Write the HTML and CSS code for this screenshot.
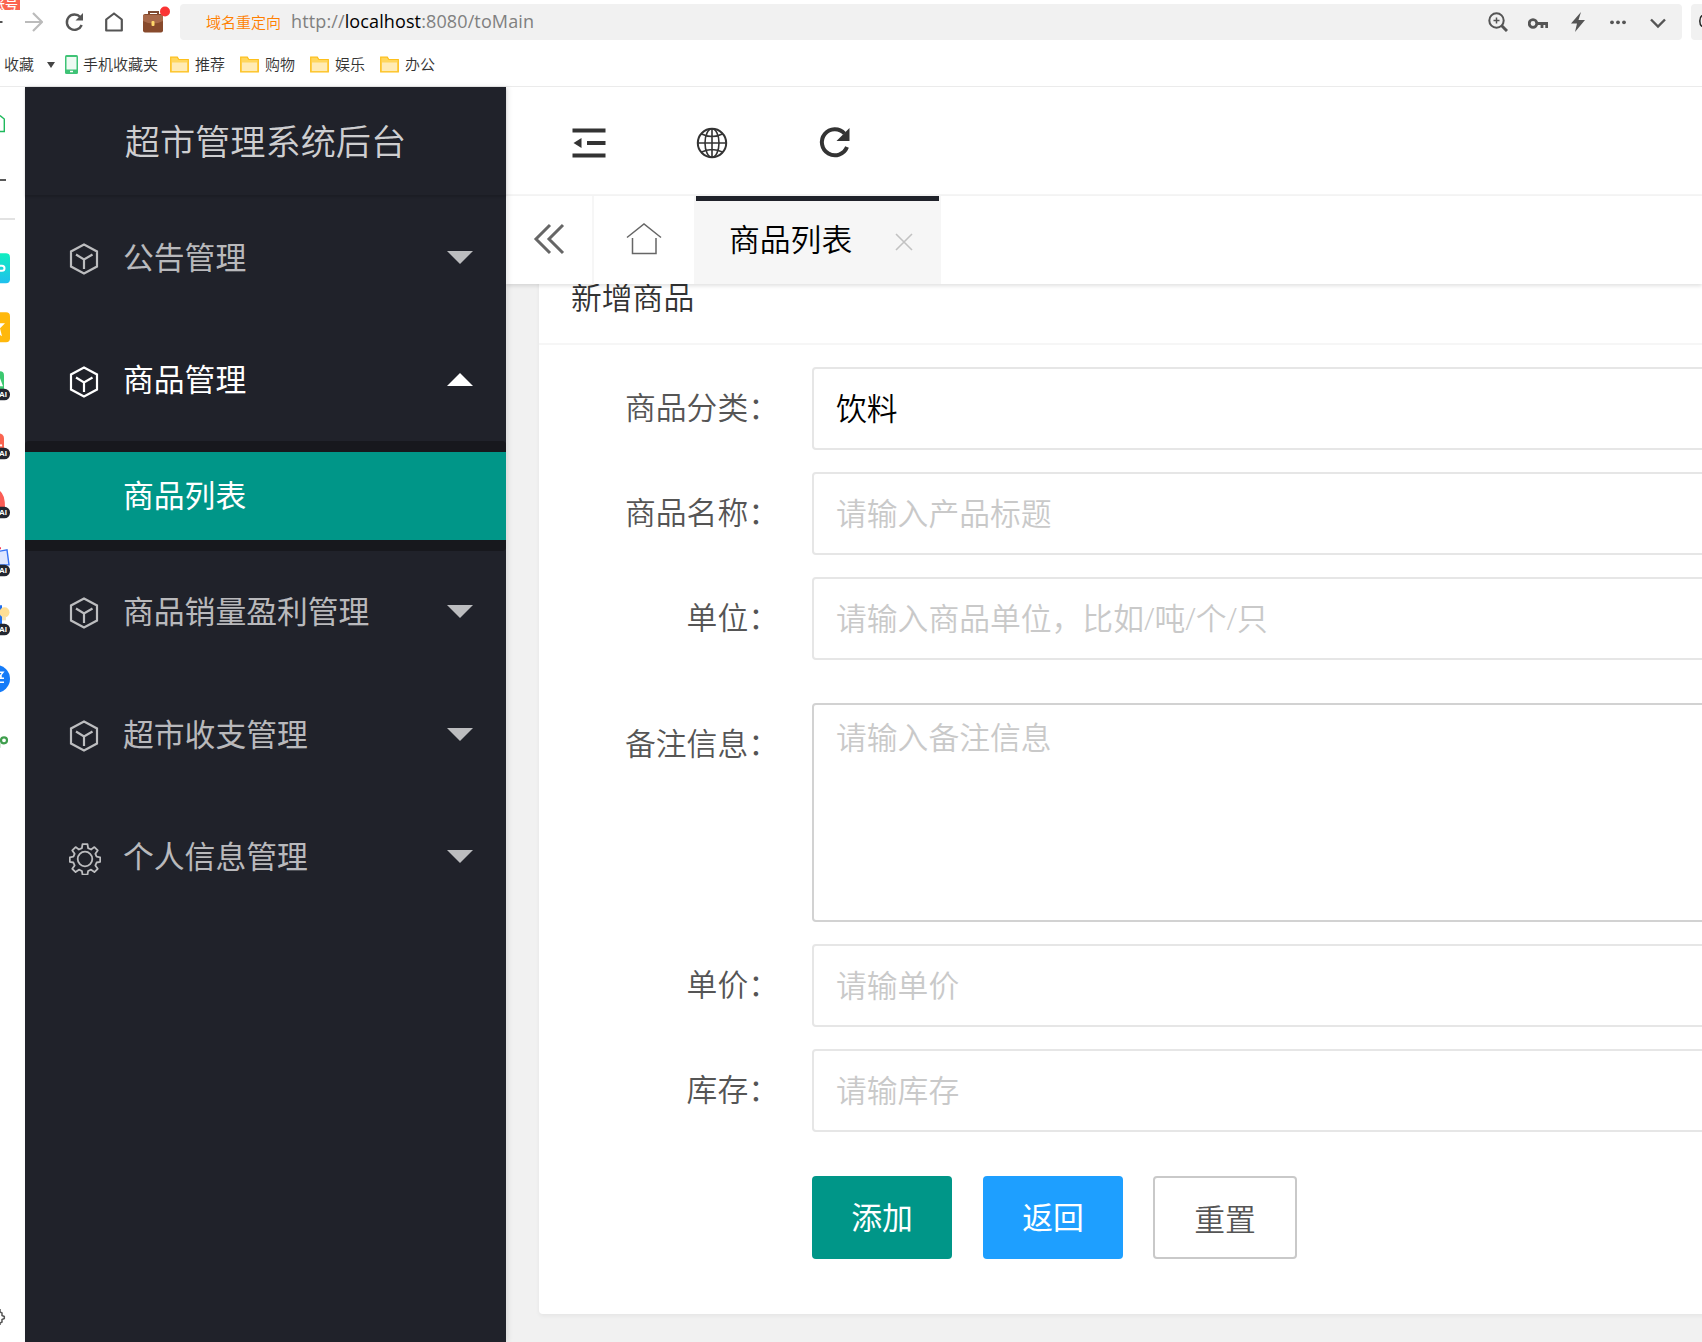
FILE: index.html
```html
<!DOCTYPE html>
<html lang="zh-CN">
<head>
  <meta charset="UTF-8">
  <title>超市管理系统后台</title>
  <link rel="stylesheet" href="styles.css">
</head>
<body>
  <!-- 图标 -->
  <svg class="defs" width="0" height="0">
    <symbol id="i-cube" viewBox="0 0 30 32">
      <path d="M15 1.500 28 8.500V23.500L15 30.500 2 23.500V8.500Z M7 11.500 15 16.500 23.500 11.500 M15 16.500V26" fill="none" stroke="currentColor" stroke-width="2.200"/>
    </symbol>
    <symbol id="i-folder" viewBox="0 0 19 17">
      <path d="M.7 15.500V1.200h6.600l1.500 2.300h9.500v12.300H.7Z" fill="#ffd65c" stroke="#fdbf1b" stroke-width="1.200"/>
      <path d="M2 6.500h15v8.500H2Z" fill="#ffebb5"/>
    </symbol>
  </svg>

  <div class="browser">
    <div class="nav">
      <div class="badge">账号</div>
      <svg class="back" width="3" height="20"><path d="M0 10h2.500" stroke="#555" stroke-width="2"/></svg>
      <svg class="forward" width="18" height="20" viewBox="0 0 18 20"><path d="M0 10h16.500M8 1l9 9-9 9" fill="none" stroke="#bbb" stroke-width="2.200"/></svg>
      <svg class="reload" width="19" height="20" viewBox="0 0 19 20"><path d="M15.300 5A7.700 7.700 0 1 0 16.700 13" fill="none" stroke="#555" stroke-width="2.400"/><path d="M18 1v7.500h-7.500Z" fill="#555"/></svg>
      <svg class="home" width="18" height="20" viewBox="0 0 18 20"><path d="M1.200 7.500 9 1.500l7.800 6v11H1.200Z" fill="none" stroke="#555" stroke-width="2.200" stroke-linejoin="round"/></svg>
      <svg class="case" width="30" height="28" viewBox="0 0 30 28">
        <path d="M7 10V7h9v3" fill="none" stroke="#7d4a33" stroke-width="2"/>
        <rect x="1" y="9" width="20" height="18.500" rx="2" fill="#884a2c"/>
        <path d="M1 10h20v6q-10 5-20 0Z" fill="#a8694a"/>
        <rect x="9.500" y="16" width="3" height="5" rx="1" fill="#ffd76a"/>
        <circle cx="23" cy="6.500" r="5" fill="#fa3434"/>
      </svg>
      <div class="address">
        <span class="redirect">域名重定向</span>
        <span class="url">http://<b>localhost</b>:8080/toMain</span>
        <div class="tools">
          <svg width="20" height="20" viewBox="0 0 20 20"><circle cx="8.500" cy="8.500" r="7.200" fill="none" stroke="#555" stroke-width="2"/><path d="M5.500 8.500h6M8.500 5.500v6" stroke="#555" stroke-width="1.500"/><path d="m13.500 13.500 5.500 5.500" stroke="#555" stroke-width="3"/></svg>
          <svg width="20" height="20" viewBox="0 0 20 20"><circle cx="5" cy="11.500" r="3.800" fill="none" stroke="#555" stroke-width="2.800"/><path d="M8 11.500h12M14 11.500v4.500M18.700 11.500v4.500" fill="none" stroke="#555" stroke-width="2.800"/></svg>
          <svg width="20" height="20" viewBox="0 0 20 20"><path d="M13 0 3 11.500h6L7 20 17 8h-6.500Z" fill="#555"/></svg>
          <svg width="20" height="20" viewBox="0 0 20 20"><g fill="#555"><circle cx="4" cy="10.300" r="1.900"/><circle cx="10" cy="10.300" r="1.900"/><circle cx="16" cy="10.300" r="1.900"/></g></svg>
          <svg width="20" height="20" viewBox="0 0 20 20"><path d="m3 7.500 7 7 7-7" fill="none" stroke="#555" stroke-width="2.400"/></svg>
        </div>
      </div>
      <div class="search"><svg width="3" height="12" viewBox="0 0 3 12"><path d="M3 .5Q.8 2 .8 6T3 11.500" fill="none" stroke="#222" stroke-width="1.500"/></svg></div>
    </div>
    <div class="bookmarks">
      <span class="fav">收藏</span>
      <i class="caret"></i>
      <svg class="phone" width="13" height="19" viewBox="0 0 13 19"><rect width="13" height="19" rx="1.500" fill="#3fc376"/><path d="M1.500 2h10v12.500h-10Z" fill="#effaf3"/><path d="M5 16.500h3" stroke="#fff" stroke-width="1.500"/></svg>
      <span class="phone-label">手机收藏夹</span>
      <div class="folder"><svg width="19" height="17"><use href="#i-folder"/></svg><span>推荐</span></div>
      <div class="folder"><svg width="19" height="17"><use href="#i-folder"/></svg><span>购物</span></div>
      <div class="folder"><svg width="19" height="17"><use href="#i-folder"/></svg><span>娱乐</span></div>
      <div class="folder"><svg width="19" height="17"><use href="#i-folder"/></svg><span>办公</span></div>
    </div>
  </div>

  <div class="main">
    <!-- 浏览器侧栏 -->
    <div class="rail">
      <svg class="rail-top" width="25" height="152" viewBox="0 0 25 152">
        <path d="M0 28.500 4.300 32v12.500H0" fill="none" stroke="#1fb95c" stroke-width="1.400"/>
        <path d="M0 93h6" stroke="#222" stroke-width="1.500"/>
        <path d="M0 132h15" stroke="#e2e2e2" stroke-width="2"/>
      </svg>
      <svg viewBox="0 0 25 58">
        <defs><linearGradient id="g" x2="0" y2="1"><stop stop-color="#10eec0"/><stop offset="1" stop-color="#20bfee"/></linearGradient></defs>
        <rect x="-20" y="14" width="30" height="30" rx="4" fill="url(#g)"/>
        <path d="M-1 26.500h3a2.500 2.500 0 0 1 0 5h-3" fill="none" stroke="#fff" stroke-width="2"/>
      </svg>
      <svg viewBox="0 0 25 58"><rect x="-20" y="14" width="30" height="30" rx="4" fill="#ffb80c"/><path d="M-4 25h9L0 30l2 8-6-4Z" fill="#fff"/></svg>
      <svg viewBox="0 0 25 58">
        <rect x="-20" y="15" width="24" height="24" rx="4" fill="#3cc870"/><path d="M-3 30 0 22l3 8Z" fill="#fff"/>
        <rect x="-8" y="32.500" width="18" height="11.500" rx="5.500" fill="#222630"/><text x="-1" y="41">AI</text>
      </svg>
      <svg viewBox="0 0 25 58">
        <rect x="-20" y="18" width="24" height="20" rx="5" fill="#fa6450"/><circle cx="1" cy="30" r="1.200" fill="#fff"/>
        <rect x="-8" y="32.500" width="18" height="11.500" rx="5.500" fill="#222630"/><text x="-1" y="41">AI</text>
      </svg>
      <svg viewBox="0 0 25 58">
        <path d="M-1 16q6 3 6 17h-6Z" fill="#fb5d56"/>
        <rect x="-8" y="32.500" width="18" height="11.500" rx="5.500" fill="#222630"/><text x="-1" y="41">AI</text>
      </svg>
      <svg viewBox="0 0 25 58">
        <path d="m-1 19 8-1.500 2 15h-10Z" fill="#dfe6ff" stroke="#3672f5" stroke-width="1.400"/><path d="M0 15v2" stroke="#f43f5e" stroke-width="2"/>
        <rect x="-8" y="32.500" width="18" height="11.500" rx="5.500" fill="#222630"/><text x="-1" y="41">AI</text>
      </svg>
      <svg viewBox="0 0 25 58">
        <path d="M-1 14h3v20h-3Z" fill="#1f6ff0"/><circle cx="4.500" cy="21" r="5" fill="#ffdf94"/><path d="M2 25h4v4H2Z" fill="#f4e3b6"/>
        <rect x="-8" y="32.500" width="18" height="11.500" rx="5.500" fill="#222630"/><text x="-1" y="41">AI</text>
      </svg>
      <svg viewBox="0 0 25 58"><circle cx="-4" cy="28.500" r="14" fill="#157bf8"/><path d="M-1 22h4l-4 5M-1 28h5M-1 32h5M1 25v3" fill="none" stroke="#fff" stroke-width="1.500"/></svg>
      <svg viewBox="0 0 25 58"><circle cx="4" cy="31" r="3" fill="none" stroke="#3f9e4d" stroke-width="2.200"/><path d="M0 33.500v5" stroke="#a6d8ad" stroke-width="1"/></svg>
      <svg class="rail-gear" width="10" height="20" viewBox="0 0 10 20"><path d="M0 2v3l2 1v2.500l2.300 1v2L2 12.500V15l-2 1v2" fill="none" stroke="#555" stroke-width="1.500"/></svg>
    </div>

    <div class="side">
      <div class="logo">超市管理系统后台</div>
      <ul class="menu">
        <li class="item"><svg class="ico"><use href="#i-cube"/></svg><span>公告管理</span><i class="more"></i></li>
        <li class="item open"><svg class="ico"><use href="#i-cube"/></svg><span>商品管理</span><i class="more"></i></li>
        <li class="child"><a class="this">商品列表</a></li>
        <li class="item"><svg class="ico"><use href="#i-cube"/></svg><span>商品销量盈利管理</span><i class="more"></i></li>
        <li class="item"><svg class="ico"><use href="#i-cube"/></svg><span>超市收支管理</span><i class="more"></i></li>
        <li class="item">
          <svg class="ico gear" viewBox="0 0 32 32"><g fill="none" stroke="currentColor" stroke-width="1.800" stroke-linejoin="round"><circle cx="16" cy="16" r="7.300"/><path d="M13.500 1.200h5l.6 4 3 1.300 3.300-2.400 3.300 3.300-2.300 3.400 1.200 2.900 3.600.6v4.600l-3.600.6-1.200 2.900 2.300 3.400-3.300 3.300-3.300-2.400-3 1.300-.6 3.600h-5l-.6-3.600-3-1.300-3.300 2.400-3.300-3.300 2.300-3.400-1.200-2.900-3.600-.6v-4.600l3.600-.6 1.200-2.900-2.300-3.400 3.300-3.300 3.300 2.400 3-1.300Z"/></g></svg>
          <span>个人信息管理</span><i class="more"></i>
        </li>
      </ul>
    </div>

    <div class="content">
      <div class="header">
        <svg width="34" height="34" viewBox="0 0 34 34"><path d="M.5 4.500h33M15 17h18.500M.5 29.500h33" stroke="#333" stroke-width="4"/><path d="M1.500 17 9.500 12v10Z" fill="#333"/></svg>
        <svg width="34" height="34" viewBox="0 0 34 34"><g fill="none" stroke="#333" stroke-width="1.600"><circle cx="17" cy="17" r="14.200" stroke-width="2"/><ellipse cx="17" cy="17" rx="7" ry="14.200"/><path d="M17 3v28M3 17h28M6 7.800q11 5.500 22 0M6 26.200q11-5.500 22 0"/></g></svg>
        <svg width="34" height="34" viewBox="0 0 34 34"><path d="M26.500 7.500A13 13 0 1 0 29 21" fill="none" stroke="#333" stroke-width="4"/><path d="M31.500 2v13h-13Z" fill="#333"/></svg>
      </div>
      <div class="tabs">
        <div class="tab prev"><svg width="32" height="32" viewBox="0 0 32 32"><path d="M17 2 3 16l14 14M30 2 16 16l14 14" fill="none" stroke="#666" stroke-width="3"/></svg></div>
        <div class="tab index"><svg width="36" height="34" viewBox="0 0 36 34"><path d="M1 15.500 18 2l17 13.500M6.500 16v15.500h23.500V16" fill="none" stroke="#666" stroke-width="1.500"/></svg></div>
        <div class="tab active"><span>商品列表</span><svg width="18" height="18" viewBox="0 0 18 18"><path d="m1 1 16 16M17 1 1 17" stroke="#c2c2c2" stroke-width="1.600"/></svg></div>
      </div>
      <div class="page">
        <div class="card">
          <div class="card-header">新增商品</div>
          <form class="form">
            <div class="row"><label>商品分类：</label><input class="input" type="text" value="饮料"></div>
            <div class="row"><label>商品名称：</label><input class="input" type="text" placeholder="请输入产品标题"></div>
            <div class="row"><label>单位：</label><input class="input" type="text" placeholder="请输入商品单位，比如/吨/个/只"></div>
            <div class="row remark"><label>备注信息：</label><textarea class="input" placeholder="请输入备注信息"></textarea></div>
            <div class="row"><label>单价：</label><input class="input" type="text" placeholder="请输单价"></div>
            <div class="row"><label>库存：</label><input class="input" type="text" placeholder="请输库存"></div>
            <div class="buttons">
              <button type="button" class="btn">添加</button>
              <button type="button" class="btn btn-normal">返回</button>
              <button type="reset" class="btn btn-primary">重置</button>
            </div>
          </form>
        </div>
      </div>
    </div>
  </div>
</body>
</html>
```
FILE: styles.css
```css
* {
  box-sizing: border-box;
}
html, body {
  margin: 0;
  padding: 0;
  width: 1702px;
  height: 1342px;
  overflow: hidden;
}
body {
  font-family: "Noto Sans CJK SC", sans-serif;
  font-weight: 350;
  font-size: 30.8px;
  background: #fff;
  display: flex;
  flex-direction: column;
}
svg {
  display: block;
  flex: none;
}
.defs {
  position: absolute;
}

/* 浏览器 */
.browser {
  height: 87px;
  flex: none;
  border-bottom: 1px solid #ebebeb;
  font-size: 15px;
  color: #333;
}
.nav {
  height: 43px;
  display: flex;
  align-items: center;
  position: relative;
}
.badge {
  position: absolute;
  left: 0;
  top: 0;
  width: 20px;
  height: 10px;
  overflow: hidden;
  background: #fb6450;
  color: #fff;
  font-size: 13px;
  font-weight: 500;
  line-height: 8px;
  text-indent: -8px;
  white-space: nowrap;
}
.forward {
  margin-left: 22px;
}
.reload {
  margin-left: 22px;
}
.home {
  margin-left: 21px;
}
.case {
  margin: -6px 0 0 19px;
}
.address {
  width: 1502px;
  height: 36px;
  margin-left: 8px;
  padding: 0 14px 0 26px;
  display: flex;
  align-items: center;
  background: #f1f1f1;
  border-radius: 4px;
  flex: none;
}
.redirect {
  color: #ff7f00;
}
.url {
  margin-left: 10px;
  padding-bottom: 1px;
  font-family: "Open Sans", sans-serif;
  font-weight: 400;
  font-size: 18px;
  letter-spacing: .12px;
  color: #808080;
}
.url b {
  font-weight: 400;
  color: #000;
}
.tools {
  margin-left: auto;
  display: flex;
  gap: 20px;
}
.search {
  width: 11px;
  height: 36px;
  margin-left: 9px;
  padding: 11px 0 0 8px;
  background: #f1f1f1;
  border-radius: 4px 0 0 4px;
}
.bookmarks {
  height: 43px;
  padding-left: 4px;
  display: flex;
  align-items: center;
  white-space: nowrap;
}
.bookmarks span {
  padding-bottom: 2px;
}
.caret {
  border: 4px solid transparent;
  border-top: 6px solid #444;
  border-bottom: 0;
  margin: 0 10px 0 13px;
}
.phone-label {
  margin: 0 12px 0 5px;
}
.folder {
  width: 70px;
  display: flex;
  align-items: center;
  gap: 6px;
}

.main {
  flex: 1;
  min-height: 0;
  display: flex;
}
.rail {
  width: 25px;
  flex: none;
  display: flex;
  flex-direction: column;
}
.rail svg {
  width: 25px;
  height: 58.7px;
}
.rail svg.rail-top {
  height: 152px;
}
.rail svg.rail-gear {
  width: 10px;
  height: 20px;
  margin: auto 0 15px;
}
.rail text {
  font: bold 8px "Liberation Sans", sans-serif;
  fill: #fff;
}

/* 菜单 */
.side {
  width: 481px;
  flex: none;
  background: #20222a;
  color: rgba(255, 255, 255, .7);
  box-shadow: 2px 0 5px rgba(0, 0, 0, .1);
  z-index: 3;
}
.logo {
  height: 108px;
  line-height: 106px;
  text-align: center;
  font-size: 35.2px;
  color: rgba(255, 255, 255, .8);
  box-shadow: 0 2px 2px rgba(0, 0, 0, .15);
}
.menu {
  list-style: none;
  margin: 0;
  padding: 1px 0 0;
}
.item {
  height: 122.6px;
  padding: 0 33px 0 43px;
  display: flex;
  align-items: center;
  font-weight: 400;
}
.item span {
  margin-left: -1px;
  padding-bottom: 4px;
}
.child ~ .item {
  padding-bottom: 2px;
}
.item.open {
  color: #fff;
}
.ico {
  width: 30px;
  height: 32px;
  margin: 4px 25px 0 1px;
}
.ico.gear {
  width: 32px;
  margin-right: 23px;
}
.more {
  margin-left: auto;
  border: 13px solid transparent;
  border-top-color: currentColor;
  border-bottom: 0;
}
.open .more {
  border-top: 0;
  border-bottom: 13px solid #fff;
}
.child {
  padding: 11px 0;
  background: #17181d;
  border-radius: 4px;
}
.this {
  display: block;
  height: 88px;
  line-height: 84px;
  padding-left: 98px;
  background: #009688;
  color: #fff;
  font-weight: 400;
}

/* 内容 */
.content {
  flex: 1;
  min-width: 0;
  display: flex;
  flex-direction: column;
  background: #f1f1f1;
}
.header {
  height: 109px;
  flex: none;
  padding: 4px 0 0 66px;
  display: flex;
  align-items: center;
  gap: 89px;
  background: #fff;
  border-bottom: 2px solid #f6f6f6;
}
.tabs {
  height: 88px;
  flex: none;
  display: flex;
  background: #fff;
  box-shadow: 0 2px 4px rgba(0, 0, 0, .12);
  z-index: 2;
}
.tab {
  display: flex;
  align-items: center;
}
.prev {
  width: 88px;
  padding: 0 0 2px 27px;
  border-right: 2px solid #f6f6f6;
}
.index {
  width: 102px;
  padding: 0 0 3px 32px;
  border-right: 2px solid #f6f6f6;
}
.active {
  width: 245px;
  padding-left: 33px;
  position: relative;
  background: #f6f6f6;
  color: #000;
}
.active span {
  padding-bottom: 6px;
}
.active::before {
  content: "";
  position: absolute;
  left: 0;
  right: 2px;
  top: 0;
  height: 5px;
  background: #20222a;
}
.active svg {
  margin: 4px 0 0 43px;
}
.page {
  flex: 1;
  min-height: 0;
  overflow: hidden;
  padding-left: 33px;
}
.card {
  width: 1250px;
  height: 1062px;
  margin-top: -32px;
  background: #fff;
  border-radius: 4px;
  box-shadow: 0 2px 4px rgba(0, 0, 0, .05);
}
.card-header {
  height: 93px;
  line-height: 87px;
  padding-left: 32px;
  border-bottom: 2px solid #f6f6f6;
  color: #333;
}
.form {
  padding-top: 22px;
}
.row {
  display: flex;
  margin-bottom: 22px;
}
.row label {
  width: 273px;
  padding-right: 33px;
  line-height: 77px;
  text-align: right;
  color: #555;
  flex: none;
}
.input {
  width: 930px;
  height: 83px;
  flex: none;
  padding: 0 22px 4px;
  border: 2px solid #e6e6e6;
  border-radius: 4px;
  background: #fff;
  color: #000;
  font: inherit;
  outline: none;
}
.input::placeholder {
  font-family: "Open Sans", "Noto Sans CJK SC", sans-serif;
  color: #c9c9c9;
}
.remark {
  margin-top: 43px;
}
textarea.input {
  height: 219px;
  padding: 9px 22px;
  line-height: 46px;
  border-color: #d2d2d2;
  resize: none;
}
.buttons {
  display: flex;
  gap: 31px;
  padding: 22px 0 0 273px;
}
.btn {
  width: 140px;
  height: 83px;
  padding: 0 0 5px;
  border: 0;
  border-radius: 4px;
  background: #009688;
  color: #fff;
  font: inherit;
  font-weight: 400;
}
.btn-normal {
  background: #1e9fff;
}
.btn-primary {
  width: 144px;
  margin-left: -1px;
  padding-bottom: 1px;
  border: 2px solid #c9c9c9;
  background: #fff;
  color: #555;
  font-weight: 350;
}
```
